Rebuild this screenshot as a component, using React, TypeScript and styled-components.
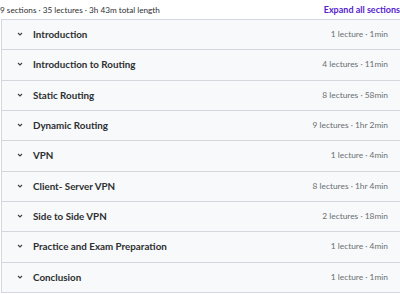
import styled, { createGlobalStyle } from 'styled-components';

const GlobalStyle = createGlobalStyle`
  html, body {
    margin: 0;
    padding: 0;
    background: #ffffff;
    overflow: hidden;
  }
  body {
    font-family: Lato, "Liberation Sans", sans-serif;
    color: #2d2f31;
  }
`;

interface Section {
  title: string;
  meta: string;
}

const sections: Section[] = [
  { title: 'Introduction', meta: '1 lecture · 1min' },
  { title: 'Introduction to Routing', meta: '4 lectures · 11min' },
  { title: 'Static Routing', meta: '8 lectures · 58min' },
  { title: 'Dynamic Routing', meta: '9 lectures · 1hr 2min' },
  { title: 'VPN', meta: '1 lecture · 4min' },
  { title: 'Client- Server VPN', meta: '8 lectures · 1hr 4min' },
  { title: 'Side to Side VPN', meta: '2 lectures · 18min' },
  { title: 'Practice and Exam Preparation', meta: '1 lecture · 4min' },
  { title: 'Conclusion', meta: '1 lecture · 1min' },
];

const Page = styled.div`
  width: 400px;
  height: 294px;
  overflow: hidden;
`;

const Summary = styled.div`
  display: flex;
  justify-content: space-between;
  align-items: center;
  height: 19px;
`;

const SummaryText = styled.span`
  font-size: 8.2px;
  color: #2d2f31;
`;

const ExpandLink = styled.button`
  border: 0;
  background: none;
  padding: 0;
  font-family: inherit;
  font-size: 9px;
  font-weight: 700;
  color: #5624d0;
  cursor: pointer;
`;

const Panel = styled.div`
  margin-left: 1px;
  width: 420px;
  border: 1px solid #d1d7dc;
  border-top: 0;
`;

const Row = styled.div`
  display: flex;
  align-items: center;
  height: 29.33px;
  border-top: 1px solid #d1d7dc;
  background: #f7f9fa;
  padding: 0 34px 1px 14px;
  box-sizing: border-box;
  height: 30.33px;
  cursor: pointer;
`;

const Chevron = styled.svg`
  width: 8px;
  height: 8px;
  margin-right: 9px;
  flex-shrink: 0;
`;

const Title = styled.span`
  flex: 1;
  font-size: 9.8px;
  font-weight: 700;
  color: #2d2f31;
`;

const Meta = styled.span`
  font-size: 8.4px;
  color: #6a6f73;
`;

export default function App() {
  return (
    <Page>
      <GlobalStyle />
      <Summary>
        <SummaryText>9 sections · 35 lectures · 3h 43m total length</SummaryText>
        <ExpandLink>Expand all sections</ExpandLink>
      </Summary>
      <Panel>
        {sections.map((s) => (
          <Row key={s.title}>
            <Chevron viewBox="0 0 8 8">
              <path d="M2 3 L4 5 L6 3" fill="none" stroke="#3e4143" strokeWidth="1.1" />
            </Chevron>
            <Title>{s.title}</Title>
            <Meta>{s.meta}</Meta>
          </Row>
        ))}
      </Panel>
    </Page>
  );
}
